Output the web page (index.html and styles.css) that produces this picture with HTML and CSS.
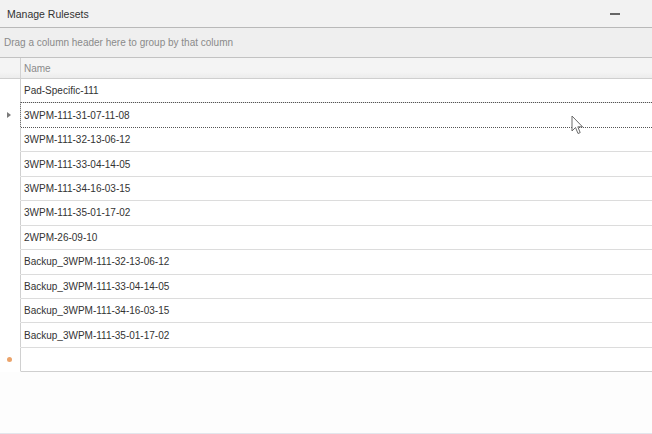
FILE: index.html
```html
<!DOCTYPE html>
<html lang="en">
<head>
<meta charset="UTF-8">
<title>Manage Rulesets</title>
<link rel="stylesheet" href="styles.css">
</head>
<body>
<div class="window">
    <div class="titlebar">
        <span class="title">Manage Rulesets</span>
        <span class="minimize"></span>
    </div>
    <div class="group-panel">Drag a column header here to group by that column</div>
    <div class="grid">
        <div class="row header">
            <div class="indicator"></div>
            <div class="cell">Name</div>
        </div>
        <div class="row">
            <div class="indicator"></div>
            <div class="cell">Pad-Specific-111</div>
        </div>
        <div class="row focused">
            <div class="indicator"><span class="arrow"></span></div>
            <div class="cell">3WPM-111-31-07-11-08</div>
        </div>
        <div class="row">
            <div class="indicator"></div>
            <div class="cell">3WPM-111-32-13-06-12</div>
        </div>
        <div class="row">
            <div class="indicator"></div>
            <div class="cell">3WPM-111-33-04-14-05</div>
        </div>
        <div class="row">
            <div class="indicator"></div>
            <div class="cell">3WPM-111-34-16-03-15</div>
        </div>
        <div class="row">
            <div class="indicator"></div>
            <div class="cell">3WPM-111-35-01-17-02</div>
        </div>
        <div class="row">
            <div class="indicator"></div>
            <div class="cell">2WPM-26-09-10</div>
        </div>
        <div class="row">
            <div class="indicator"></div>
            <div class="cell">Backup_3WPM-111-32-13-06-12</div>
        </div>
        <div class="row">
            <div class="indicator"></div>
            <div class="cell">Backup_3WPM-111-33-04-14-05</div>
        </div>
        <div class="row">
            <div class="indicator"></div>
            <div class="cell">Backup_3WPM-111-34-16-03-15</div>
        </div>
        <div class="row">
            <div class="indicator"></div>
            <div class="cell">Backup_3WPM-111-35-01-17-02</div>
        </div>
        <div class="row new-row">
            <div class="indicator"><span class="star"></span></div>
            <div class="cell"></div>
        </div>
    </div>
    <div class="empty-area"></div>

    <svg class="cursor" width="13" height="20" viewBox="0 0 13 20">
        <path d="M1 1 L1 16 L4.5 12.5 L7 18.5 L9.2 17.6 L6.8 11.8 L11.5 11.8 Z" fill="#fff" stroke="#6a6a6a" stroke-width="1" stroke-linejoin="round"/>
    </svg>
</div>
</body>
</html>
```

FILE: styles.css
```css
body {
    margin: 0;
    background-color: #fdfdfd;
    font-family: "Liberation Sans", Arial, sans-serif;
    font-size: 10px;
}
.window {
    position: relative;
    width: 652px;
    height: 434px;
    display: flex;
    flex-direction: column;
    overflow: hidden;
    border-bottom: 1px solid #e3e6ec;
    box-sizing: border-box;
}
.titlebar {
    height: 27px;
    flex: none;
    display: flex;
    align-items: center;
    justify-content: space-between;
    padding: 0 32px 0 7px;
    background-color: #f2f2f2;
    border-bottom: 1px solid #b9b9b9;
}
.title {
    color: #333;
    font-size: 10.5px;
}
.minimize {
    width: 10px;
    height: 2px;
    background-color: #666;
}
.group-panel {
    height: 29px;
    flex: none;
    display: flex;
    align-items: center;
    padding-left: 4px;
    color: #8a8a8a;
    background-color: #efefef;
    border-bottom: 1px solid #c2c2c2;
}
.grid {
    flex: none;
    background-color: #fff;
}
.row {
    display: flex;
    height: 24.45px;
    box-sizing: border-box;
    border-bottom: 1px solid #dcdcdc;
}
.indicator {
    width: 20px;
    flex: none;
    border-right: 1px solid #d0d0d0;
    display: flex;
    align-items: center;
    justify-content: center;
    background-color: #fff;
}
.row .indicator {
    border-bottom: 1px solid #fff;
    margin-bottom: -1px;
}
.cell {
    flex: 1;
    display: flex;
    align-items: center;
    padding-left: 3px;
    color: #333;
}
.header {
    height: 21px;
    background: linear-gradient(#f4f4f4, #f4f4f4 70%, #ececec);
    border-bottom: 1px solid #cfcfcf;
}
.header .indicator {
    background: transparent;
    border-bottom: none;
    margin-bottom: 0;
    border-right-color: #d2d2d2;
}
.header .cell {
    color: #8a8a8a;
}
.focused {
    border-bottom: 1px dotted #555;
}
.focused .cell {
    border-top: 1px dotted #555;
    border-left: 1px dotted #777;
    margin-top: -1px;
    margin-left: -1px;
}
.arrow {
    width: 0;
    height: 0;
    border-top: 3.5px solid transparent;
    border-bottom: 3.5px solid transparent;
    border-left: 4px solid #7a7a7a;
    margin-left: -2px;
}
.star {
    width: 5px;
    height: 5px;
    border-radius: 50%;
    background-color: #eba36a;
    margin-left: -2px;
}
.new-row {
    border-bottom-color: #cfcfcf;
}
.empty-area {
    flex: 1;
    background-color: #fdfdfd;
}
.cursor {
    position: absolute;
    left: 571px;
    top: 115px;
}
```
